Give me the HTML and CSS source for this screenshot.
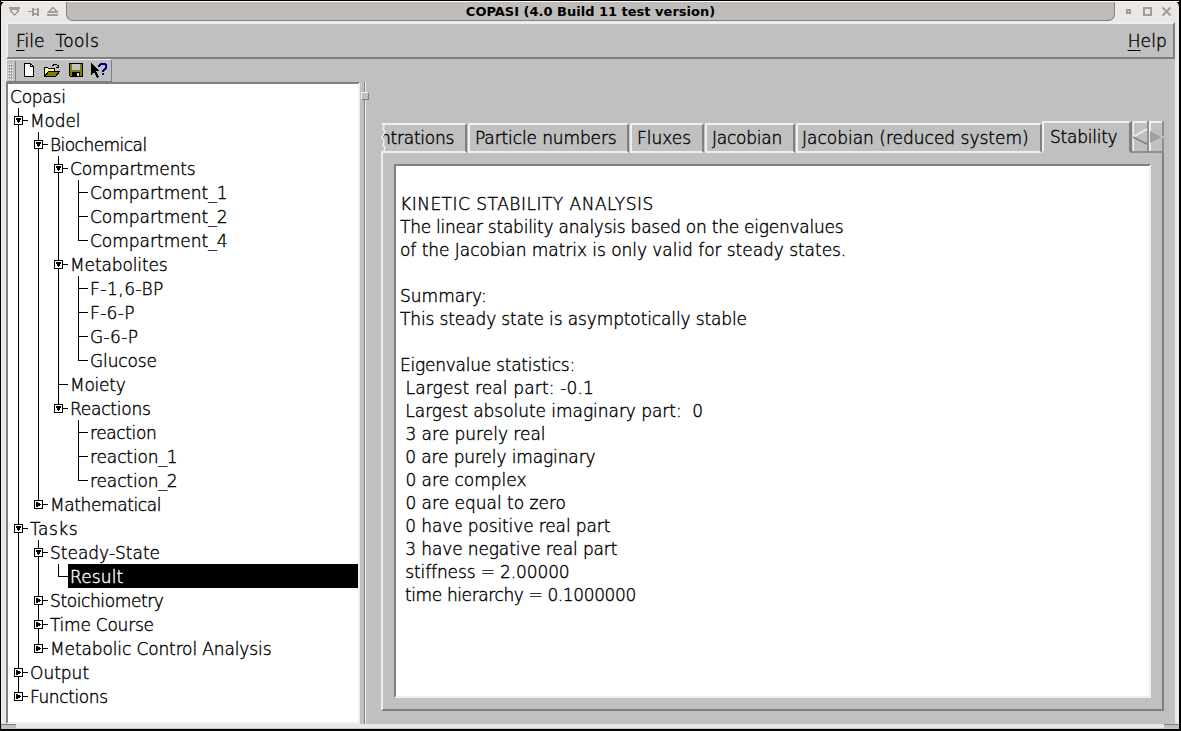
FILE: index.html
```html
<!DOCTYPE html>
<html lang="en">
<head>
<meta charset="utf-8">
<title>COPASI (4.0 Build 11 test version)</title>
<link rel="stylesheet" href="styles.css">
</head>
<body>
<div class="window">
  <header class="titlebar">
    <svg class="left-buttons" width="65" height="21" viewBox="0 0 65 21" shape-rendering="crispEdges">
      <g fill="#a39b94">
        <path d="M8 7h11v2H8zM9 9h9v2l-4 5h-1l-4-5z"/>
        <path fill="#ebe7e4" d="M11 10h5v1l-2 3h-1l-2-3z"/>
        <path d="M27 11h4v1h-4zM31 8h2v8h-2zM33 9h4v1h-4zM33 13h4v2h-4zM36 8h2v8h-2z"/>
        <path d="M46 14h11v2H46zM51 7h1l5 5v1H46v-1z"/>
        <path fill="#ebe7e4" d="M51 9h1l2 2h-5z"/>
      </g>
    </svg>
    <h1 class="title">COPASI (4.0 Build 11 test version)</h1>
    <svg class="right-buttons" width="64" height="21" viewBox="0 0 64 21">
      <path d="M12 10h3v3h-3z" fill="none" stroke="#a39b94" stroke-width="2"/>
      <path d="M29 8h7v7h-7z" fill="none" stroke="#a39b94" stroke-width="2"/>
      <path d="M47.500 7.500l8 8m0-8l-8 8" stroke="#a39b94" stroke-width="2"/>
    </svg>
  </header>
  <div class="client">
    <nav class="menubar">
      <span class="menu"><u>F</u>ile</span>
      <span class="menu wide-2"><u>T</u>ools</span>
      <span class="menu help wide-1"><u>H</u>elp</span>
    </nav>
    <div class="toolrow">
      <div class="toolbar">
        <svg width="104" height="22" viewBox="0 0 104 22" shape-rendering="crispEdges">
          <path d="M1 4v16M3 4v16M5 4v16" transform="translate(.5 0)" stroke="#efefef" stroke-dasharray="1 2"/>
          <path d="M2 5v15M4 5v15" transform="translate(.5 0)" stroke="#808080" stroke-dasharray="1 2"/>
          <path d="M8.500 1v20" stroke="#808080"/>
          <g transform="translate(1 0)">
          <path d="M16.500 3.500h6l3 3v10h-9z" fill="#fff" stroke="#000"/><path d="M22.500 3.500v3h3" fill="none" stroke="#000"/>
          <path d="M36.500 15.500v-8h3l1 1h6v3" fill="#ffff80" stroke="#000"/>
          <path d="M36.500 16.500l4-5h11l-4 5z" fill="#808000" stroke="#000"/>
          <path d="M44.500 5.500l2-1h2l2 2m0-2v3h-3" fill="none" stroke="#000"/>
          <path d="M61.500 3.500h13v13h-12l-1-1z" fill="#808000" stroke="#000"/>
          <path d="M64 4h8v6h-8z" fill="#c0c0c0"/><path d="M64 12h8v4h-8z"/><path d="M69 13h2v3h-2z" fill="#e0e0e0"/>
          <path d="M83 3l9 8h-4l3 6-2 1-3-6-3 3z"/>
          <path d="M90 7V5l2-2h5l2 2v3l-3 3v1h-2v-2l3-3V5h-4l-1 2zM94 13h2v2h-2z" fill="#000080"/>
          </g>
        </svg>
      </div>
    </div>
    <main class="body">
      <section class="treeview">
        <div class="node root tight-2">Copasi</div>
        <ul class="tree">
          <li><div class="node open tight-1">Model</div>
            <ul>
              <li><div class="node open tight-4">Biochemical</div>
                <ul>
                  <li><div class="node open tight-1">Compartments</div>
                    <ul>
                      <li><div class="node">Compartment_1</div></li>
                      <li><div class="node">Compartment_2</div></li>
                      <li><div class="node">Compartment_4</div></li>
                    </ul>
                  </li>
                  <li><div class="node open tight-1">Metabolites</div>
                    <ul>
                      <li><div class="node wide-3">F-1,6-BP</div></li>
                      <li><div class="node wide-2">F-6-P</div></li>
                      <li><div class="node wide-2">G-6-P</div></li>
                      <li><div class="node tight-1">Glucose</div></li>
                    </ul>
                  </li>
                  <li><div class="node tight-2">Moiety</div></li>
                  <li><div class="node open tight-2">Reactions</div>
                    <ul>
                      <li><div class="node tight-3">reaction</div></li>
                      <li><div class="node tight-1">reaction_1</div></li>
                      <li><div class="node tight-1">reaction_2</div></li>
                    </ul>
                  </li>
                </ul>
              </li>
              <li><div class="node closed tight-3">Mathematical</div></li>
            </ul>
          </li>
          <li><div class="node open wide-3">Tasks</div>
            <ul>
              <li><div class="node open">Steady-State</div>
                <ul>
                  <li><div class="node selected wide-1">Result</div></li>
                </ul>
              </li>
              <li><div class="node closed tight-3">Stoichiometry</div></li>
              <li><div class="node closed tight-2">Time Course</div></li>
              <li><div class="node closed tight-1">Metabolic Control Analysis</div></li>
            </ul>
          </li>
          <li><div class="node closed">Output</div></li>
          <li><div class="node closed tight-3">Functions</div></li>
        </ul>
      </section>
      <div class="splitter"><span class="handle"></span></div>
      <section class="content">
        <div class="tabs">
          <div class="tab clipped"><span class="tight-2">ntrations</span><svg width="5" height="30" viewBox="0 0 5 30"><path d="M0 0h1l2 3-1 3 2 3-3 5 2 4-1 4 2 3-2 5H0z" fill="#c0c0c0"/><path d="M1 0l2 3-1 3 2 3-3 5 2 4-1 4 2 3-2 5" fill="none" stroke="#efefef" stroke-width="1.500"/></svg></div>
          <div class="tab particle tight-1">Particle numbers</div>
          <div class="tab fluxes">Fluxes</div>
          <div class="tab jacobian tight-2">Jacobian</div>
          <div class="tab reduced">Jacobian (reduced system)</div>
          <div class="tab active tight-2">Stability</div>
          <svg class="arrows" width="33" height="32" viewBox="0 0 33 32">
            <path d="M0 0h33v32H0z" fill="#c0c0c0"/>
            <path d="M2 30V1h14M19 30V1h13" fill="none" stroke="#efefef" stroke-width="2"/>
            <path d="M0 31h32M17 0v32M32 0v15M32 17v15M.5 0v31" stroke="#808080" stroke-width="1.500"/>
            <path d="M2 16L16 8" stroke="#efefef" stroke-width="2"/><path d="M2 16l14 7" stroke="#808080" stroke-width="1.500"/>
            <path d="M19 10l11 6-11 6z" fill="#a0a0a4"/>
          </svg>
        </div>
        <div class="pane">
<pre class="report">

<span class="wide-3">KINETIC STABILITY ANALYSIS</span>
<span class="tight-2">The linear stability analysis based on the eigenvalues</span>
<span class="tight-0">of the Jacobian matrix is only valid for steady states.</span>

<span>Summary:</span>
<span class="tight-1">This steady state is asymptotically stable</span>

<span class="tight-2">Eigenvalue statistics:</span>
<span class="wide-1"> Largest real part: -0.1</span>
<span class="tight-0"> Largest absolute imaginary part:  0</span>
<span> 3 are purely real</span>
<span class="tight-1"> 0 are purely imaginary</span>
<span> 0 are complex</span>
<span> 0 are equal to zero</span>
<span class="tight-1"> 0 have positive real part</span>
<span class="tight-1"> 3 have negative real part</span>
<span class="tight-1"> stiffness = 2.00000</span>
<span class="tight-3"> time hierarchy = 0.1000000</span>
</pre>
        </div>
      </section>
    </main>
  </div>
  <footer class="sizebar"><span class="grip"></span><span class="grip"></span></footer>
</div>
</body>
</html>
```
FILE: styles.css
```css
* { box-sizing: border-box; }
body { margin: 0; background: #000; font: 200 17px/24px "DejaVu Sans", Verdana, sans-serif; color: #000; -webkit-text-stroke: .4px; }
.tight-0 { letter-spacing: -.04px; }
.tight-1 { letter-spacing: -.12px; }
.tight-2 { letter-spacing: -.24px; }
.tight-3 { letter-spacing: -.39px; }
.tight-4 { letter-spacing: -.55px; }
.wide-1 { letter-spacing: .15px; }
.wide-2 { letter-spacing: .35px; }
.wide-3 { letter-spacing: .5px; }
.window { width: 1181px; height: 731px; background: #ebe7e4; border: 1px solid #000; border-right-width: 2px; border-bottom-width: 2px; border-radius: 7px; display: flex; flex-direction: column; }
.titlebar { height: 21px; flex: none; display: flex; border-top: 1px solid #fff; }
.title { margin: 0; width: 1049px; height: 19px; background: #bfbcba; border: 1px solid #86817d; border-top: 0; border-radius: 0 0 7px 7px; text-align: center; font: bold 13px/19px "DejaVu Sans", sans-serif; -webkit-text-stroke: 0; }
.left-buttons, .right-buttons { flex: none; margin-top: -2px; }
.client { margin: 0 4px 0 5px; flex: 1; min-height: 0; display: flex; flex-direction: column; background: #c0c0c0; }
.menubar { height: 37px; flex: none; display: flex; gap: 11px; padding: 5px 6px 0 8px; border: 2px solid #efefef; border-right-color: #808080; border-bottom-color: #808080; line-height: 24px; }
.menu u { text-underline-offset: 3px; text-decoration-thickness: 1px; }
.help { margin-left: auto; }
.toolrow { height: 23px; flex: none; }
.toolbar { width: 106px; height: 23px; border: 1px solid #efefef; border-right-color: #808080; border-bottom-color: #808080; }
.toolbar svg { display: block; }
.body { flex: 1; min-height: 0; display: flex; }
.treeview { width: 354px; border: 2px solid #808080; border-right-color: #efefef; border-bottom-color: #efefef; background: #fff; }
.node { position: relative; height: 24px; line-height: 26px; white-space: nowrap; }
.root { padding-left: 2px; }
.tree, .tree ul { margin: 0; padding: 0; list-style: none; }
.tree { padding-left: 22px; }
.tree ul { padding-left: 20px; }
.tree li { position: relative; }
.tree li::before { content: ""; position: absolute; left: -12px; top: 0; bottom: 0; width: 1px; background: #000; }
.tree li:last-child::before { bottom: auto; height: 13px; }
.tree .node::before { content: ""; position: absolute; left: -12px; top: 12px; width: 10px; height: 1px; background: #000; }
.open::after, .closed::after { content: ""; position: absolute; left: -16px; top: 8px; width: 9px; height: 9px; box-sizing: border-box; border: 1px solid #000; }
.open::after { background: linear-gradient(#000, #000) 1px 1px / 5px 2px no-repeat, linear-gradient(#000, #000) 2px 3px / 3px 2px no-repeat, linear-gradient(#000, #000) 3px 5px / 1px 1px no-repeat, #fff; }
.closed::after { background: linear-gradient(#000, #000) 1px 1px / 2px 5px no-repeat, linear-gradient(#000, #000) 3px 2px / 2px 3px no-repeat, linear-gradient(#000, #000) 5px 3px / 1px 1px no-repeat, #fff; }
.selected { margin-left: -2px; padding-left: 2px; background: #000; color: #fff; }
.tree .selected::before { left: -10px; }
.splitter { width: 10px; padding: 10px 0 0 1px; background: linear-gradient(#808080, #808080) 4px 0 / 1px 100% no-repeat, linear-gradient(#efefef, #efefef) 5px 0 / 1px 100% no-repeat; }
.handle { display: block; width: 8px; height: 8px; background: #c0c0c0; border: 1px solid #efefef; border-right-color: #808080; border-bottom-color: #808080; }
.content { flex: 1; margin: 39px 11px 14px; display: flex; flex-direction: column; }
.tabs { height: 32px; display: flex; align-items: flex-end; }
.tab { height: 30px; margin-right: 1px; padding: 1px 0 0 5px; white-space: nowrap; overflow: hidden; border: 2px solid #efefef; border-right-color: #808080; border-bottom-color: #efefef; border-radius: 2px 2px 0 0; }
.clipped { width: 86px; border-left: 0; padding: 0; display: flex; }
.clipped svg { margin-top: -2px; flex: none; order: -1; position: relative; }
.clipped span { margin: 1px 0 0 -6px; }
.particle { width: 161px; }
.fluxes { width: 74px; }
.jacobian { width: 90px; }
.reduced { width: 246px; margin-right: 0; padding-left: 4px; }
.active { width: 89px; height: 32px; margin: 0; padding: 2px 0 0 6px; border-bottom-color: #c0c0c0; }
.arrows { flex: none; }
.pane { flex: 1; padding: 11px; border: 2px solid #808080; border-left-color: #efefef; border-top: 0; }
.report { margin: 0; height: 534px; padding: 4px 0 0 4px; background: #fff; border: 2px solid #808080; border-right-color: #efefef; border-bottom-color: #efefef; font: inherit; line-height: 23px; white-space: pre; }
.sizebar { height: 5px; flex: none; display: flex; justify-content: space-between; border-bottom: 1px solid #c9bfba; }
.grip { width: 15px; height: 4px; background: #c0c0c0; border-top: 1px solid #808080; }
```
